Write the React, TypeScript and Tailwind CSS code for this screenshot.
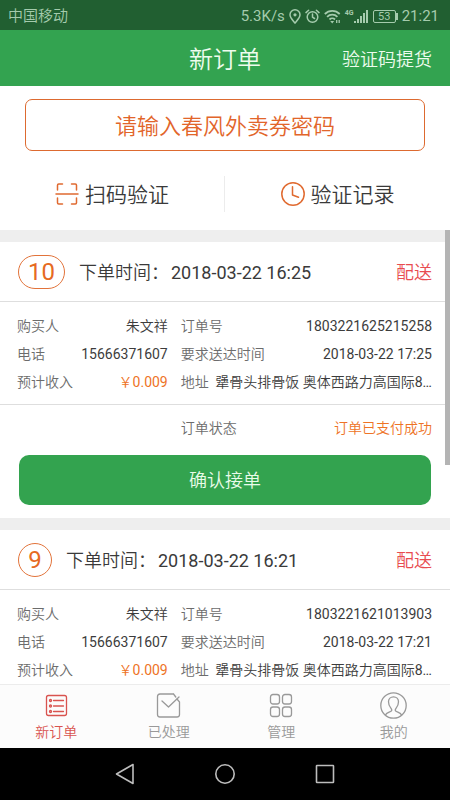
import type { ReactNode } from "react";

type Order = {
  no: number;
  placedAt: string;
  buyer: string;
  phone: string;
  income: string;
  orderId: string;
  deliverAt: string;
  address: string;
};

const orders: Order[] = [
  {
    no: 10,
    placedAt: "2018-03-22 16:25",
    buyer: "朱文祥",
    phone: "15666371607",
    income: "￥0.009",
    orderId: "1803221625215258",
    deliverAt: "2018-03-22 17:25",
    address: "犟骨头排骨饭 奥体西路力高国际8…",
  },
  {
    no: 9,
    placedAt: "2018-03-22 16:21",
    buyer: "朱文祥",
    phone: "15666371607",
    income: "￥0.009",
    orderId: "1803221621013903",
    deliverAt: "2018-03-22 17:21",
    address: "犟骨头排骨饭 奥体西路力高国际8…",
  },
];

function StatusBar() {
  return (
    <div className="flex h-[30px] shrink-0 items-center justify-between bg-[#215f31] pt-0.5 pr-[11px] pl-2 text-[15px] text-[#a5cbad]">
      <span>中国移动</span>
      <div className="flex items-center gap-1">
        <span>5.3K/s</span>
        <svg width="12" height="15" viewBox="0 0 12 15" fill="none" stroke="currentColor" strokeWidth="1.5">
          <path d="M6 14C3.5 11 1 8.6 1 5.8a5 5 0 0 1 10 0C11 8.6 8.5 11 6 14Z" />
          <circle cx="6" cy="5.8" r="1.6" fill="currentColor" stroke="none" />
        </svg>
        <svg width="15" height="15" viewBox="0 0 15 15" fill="none" stroke="currentColor" strokeWidth="1.5" strokeLinecap="round">
          <circle cx="7.5" cy="8" r="5.3" />
          <path d="M7.5 5v3.2l2 1.3M1 3.6 3.6 1.2M14 3.6 11.4 1.2" />
        </svg>
        <svg width="17" height="15" viewBox="0 0 17 15" fill="none" stroke="currentColor" strokeWidth="1.8">
          <path d="M.8 5a10.500 10.500 0 0 1 14.900 0M3.100 7.800a7.200 7.200 0 0 1 10.300 0M5.500 10.500a3.900 3.900 0 0 1 5.500 0" />
          <path d="M6.200 12l2 2.400 2-2.400Z" fill="currentColor" stroke="none" />
          <path d="M12.700 11v3M15.200 11v3" strokeWidth="1.300" />
        </svg>
        <div className="flex items-start">
          <span className="text-[7px] leading-[8px] font-bold">4G</span>
          <svg width="15" height="15" viewBox="0 0 15 15" fill="currentColor">
            <path d="M0 12h2v2H0zM3 10h2v4H3zM6 7h2v7H6zM9 4h2v10H9zM12 1h2v13h-2z" />
          </svg>
        </div>
        <div className="flex items-center">
          <span className="flex h-[13px] w-[23px] items-center justify-center rounded-[2px] border border-current text-[11px] leading-none">
            53
          </span>
          <span className="h-[7px] w-[2px] bg-current" />
        </div>
        <span>21:21</span>
      </div>
    </div>
  );
}

function ScanIcon() {
  return (
    <svg width="24" height="24" viewBox="0 0 24 24" fill="none" stroke="#e06a30" strokeWidth="1.5" strokeLinecap="round">
      <path d="M2.5 8V3.2q0-1.2 1.2-1.2H7.5M16.5 2h3.8q1.2 0 1.2 1.2V8M21.5 16v4.8q0 1.2-1.2 1.2H16.5M7.5 22H3.7q-1.2 0-1.2-1.2V16M1 12h22" />
    </svg>
  );
}

function ClockIcon() {
  return (
    <svg width="24" height="24" viewBox="0 0 24 24" fill="none" stroke="#e06a30" strokeWidth="1.5" strokeLinecap="round" strokeLinejoin="round">
      <circle cx="12" cy="12" r="11.2" />
      <path d="M11.5 4.8v8.2l6 2.2" />
    </svg>
  );
}

function Field({ label, accent, children }: { label: string; accent?: boolean; children: ReactNode }) {
  return (
    <div className="flex justify-between whitespace-nowrap">
      <dt className="text-[#6c6c6c]">{label}</dt>
      <dd className={accent ? "text-[#ee7326]" : "text-[#3c3c3c]"}>{children}</dd>
    </div>
  );
}

function OrderCard({ order }: { order: Order }) {
  return (
    <article className="mt-3 bg-white text-[14px] leading-7">
      <header className="flex h-[60px] items-center border-b border-[#dedede] px-[18px] text-[18px]">
        <span className="mr-[14px] flex h-[34px] min-w-[34px] items-center justify-center rounded-full border border-[#e2733a] px-[9px] text-[24px] leading-none text-[#e66a22]">
          {order.no}
        </span>
        <h2 className="flex flex-1 gap-0.5 pt-0.5 text-[#3a3a3a]">
          <span>下单时间：</span>
          <time>{order.placedAt}</time>
        </h2>
        <span className="pt-0.5 text-[#e84c50]">配送</span>
      </header>
      <div className="grid grid-cols-[3fr_5fr] gap-[13px] border-b border-[#dedede] pt-[10px] pr-[18px] pb-2 pl-[17px]">
        <dl>
          <Field label="购买人">{order.buyer}</Field>
          <Field label="电话">{order.phone}</Field>
          <Field label="预计收入" accent>{order.income}</Field>
        </dl>
        <dl>
          <Field label="订单号">{order.orderId}</Field>
          <Field label="要求送达时间">{order.deliverAt}</Field>
          <Field label="地址">{order.address}</Field>
        </dl>
      </div>
      <div className="grid h-11 grid-cols-[3fr_5fr] items-center gap-[13px] pt-0.5 pr-[18px] pl-[17px]">
        <dl className="col-start-2">
          <Field label="订单状态" accent>订单已支付成功</Field>
        </dl>
      </div>
      <div className="px-[19px] pt-[6px] pb-[13px]">
        <button type="button" className="h-[50px] w-full rounded-[10px] bg-[#33a34f] pt-0.5 text-[18px] text-[#e9fbe9]">
          确认接单
        </button>
      </div>
    </article>
  );
}

const tabs: { label: string; active?: boolean; icon: ReactNode }[] = [
  {
    label: "新订单",
    active: true,
    icon: (
      <>
        <rect x="3.5" y="3.5" width="20" height="20" rx="2" />
        <path d="M10.5 8.5h10M10.5 14h10M10.5 19.5h10" />
        <circle cx="7.5" cy="8.5" r="1" />
        <circle cx="7.5" cy="14" r="1" />
        <circle cx="7.5" cy="19.5" r="1" />
      </>
    ),
  },
  {
    label: "已处理",
    icon: (
      <>
        <path d="M18.5 2H5q-2.500 0-2.500 2.500v18q0 2.500 2.500 2.500h17q2.500 0 2.500-2.500V10L22 7M18.500 2 20.800 5" />
        <path d="M7 9l6.500 6L24 5" />
      </>
    ),
  },
  {
    label: "管理",
    icon: (
      <>
        <rect x="2.5" y="2.5" width="9" height="9.5" rx="2.5" />
        <rect x="14.5" y="2.5" width="9" height="9.5" rx="2.5" />
        <rect x="2.5" y="15" width="9" height="9.5" rx="2.5" />
        <rect x="14.5" y="15" width="9" height="9.5" rx="2.5" />
      </>
    ),
  },
  {
    label: "我的",
    icon: (
      <>
        <circle cx="13.5" cy="13.5" r="12.7" />
        <path d="M5.5 23c.6-2.200 4.500-2.800 5.800-4 .9-.9.4-2-.6-3.200C9.200 14 8.500 12 8.500 9.800c0-3 2.200-4.900 5-4.900s5 1.900 5 4.900c0 2.200-.7 4.200-2.200 6-1 1.200-1.500 2.300-.6 3.200 1.300 1.200 5.200 1.800 5.800 4" />
      </>
    ),
  },
];

function TabBar() {
  return (
    <nav className="grid h-16 shrink-0 grid-cols-4 border-t border-[#ececec] bg-[#fcfcfc]">
      {tabs.map((tab) => (
        <button
          key={tab.label}
          type="button"
          className={`flex flex-col items-center gap-[3px] pt-[7px] text-[14px] leading-5 ${tab.active ? "text-[#d9534f]" : "text-[#999]"}`}
        >
          <svg width="27" height="27" viewBox="0 0 27 27" fill="none" stroke="currentColor" strokeWidth="1.3" strokeLinecap="round" strokeLinejoin="round">
            {tab.icon}
          </svg>
          {tab.label}
        </button>
      ))}
    </nav>
  );
}

function SystemNav() {
  return (
    <div className="flex h-[52px] shrink-0 items-center justify-center gap-20 bg-black text-[#bdbdbd]">
      <svg width="20" height="22" viewBox="0 0 20 22" fill="none" stroke="currentColor" strokeWidth="1.6" strokeLinejoin="round">
        <path d="M1.5 11 18 1.5v19Z" />
      </svg>
      <svg width="20" height="22" viewBox="0 0 20 22" fill="none" stroke="currentColor" strokeWidth="1.6">
        <circle cx="10" cy="11" r="9.2" />
      </svg>
      <svg width="20" height="22" viewBox="0 0 20 22" fill="none" stroke="currentColor" strokeWidth="1.6">
        <rect x="1.5" y="2.5" width="17" height="17" rx="0.5" />
      </svg>
    </div>
  );
}

export default function App() {
  return (
    <div className="flex h-screen flex-col overflow-hidden bg-white font-[Roboto,'Noto_Sans_CJK_SC_DemiLight','Noto_Sans_CJK_SC',sans-serif]">
      <StatusBar />
      <header className="grid h-14 shrink-0 grid-cols-[1fr_auto_1fr] items-center bg-[#33a350] px-[18px] pt-[3px] text-[#eefcee]">
        <h1 className="col-start-2 text-[24px]">新订单</h1>
        <button type="button" className="justify-self-end text-[18px]">
          验证码提货
        </button>
      </header>
      <div className="relative flex min-h-0 flex-1 flex-col">
        <main className="min-h-0 flex-1 overflow-y-auto bg-[#eee] [scrollbar-width:none]">
          <section className="bg-white pt-[13px] pb-5">
            <div className="px-[25px]">
              <input
                type="text"
                aria-label="请输入春风外卖券密码"
                placeholder="请输入春风外卖券密码"
                className="block h-[52px] w-full rounded-[7px] border border-[#dd6a30] pt-[3px] text-center text-[22px] text-[#e2652a] placeholder:text-[#e2652a]"
              />
            </div>
            <div className="mt-[25px] grid h-[34px] grid-cols-2 divide-x divide-[#ececec] text-[21px] text-[#3a3a3a]">
              <button type="button" className="flex items-center justify-center gap-[6px]">
                <ScanIcon />
                <span className="pt-1">扫码验证</span>
              </button>
              <button type="button" className="flex items-center justify-center gap-[6px]">
                <ClockIcon />
                <span className="pt-1">验证记录</span>
              </button>
            </div>
          </section>
          {orders.map((order) => (
            <OrderCard key={order.no} order={order} />
          ))}
        </main>
        <div className="absolute top-36 right-0 h-[235px] w-[5px] bg-[#b4b4b4]" />
      </div>
      <TabBar />
      <SystemNav />
    </div>
  );
}
